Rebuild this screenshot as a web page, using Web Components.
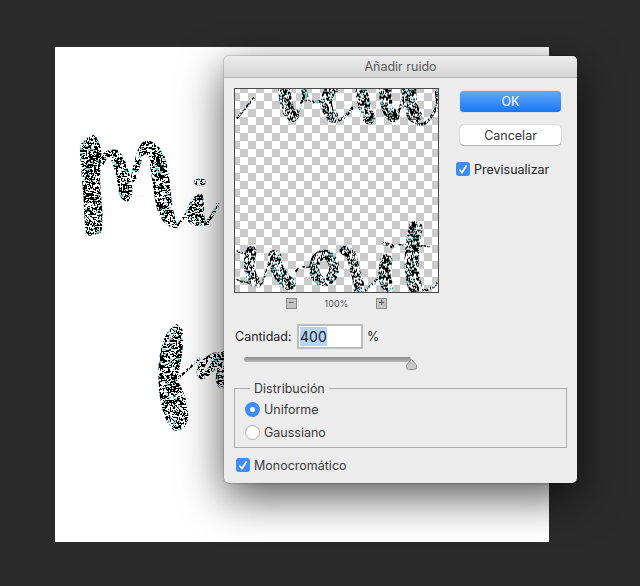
<!DOCTYPE html>
<html lang="es">
<head>
<meta charset="utf-8">
<title>Añadir ruido</title>
<style>
  html, body { margin: 0; height: 100%; background: #2b2b2b; }
  body { font: 12.5px Inter, "Liberation Sans", Arial, sans-serif; color: #222; }
</style>
</head>
<body>
<ps-desktop>
  <noise-page slot="page"></noise-page>
  <ps-dialog slot="dialog" heading="Añadir ruido">
    <ps-noise-dialog></ps-noise-dialog>
  </ps-dialog>
</ps-desktop>

<script>
// small seeded random so the speckle is the same on every run
function makeNoise(seed, cell, size) {
  let s = seed;
  let rnd = () => {
    s = (s * 1664525 + 1013904223) % 4294967296;
    return s / 4294967296;
  };
  let paths = { b: '', w: '', t: '' };
  let prev = [];
  for (let y = 0; y < size; y++) {
    for (let x = 0; x < size; x++) {
      let r = rnd();
      let kind = r < 0.48 ? 'b' : r < 0.9 ? 'w' : 't';
      // copy a neighbour now and then, the real speckle clumps together
      let c = rnd();
      if (c < 0.2 && x > 0) kind = prev[x - 1];
      else if (c < 0.35 && y > 0) kind = prev[x];
      prev[x] = kind;
      paths[kind] += `M${x * cell} ${y * cell}h${cell}v${cell}h-${cell}z`;
    }
  }
  return `<path d="${paths.w}" fill="#fff"/><path d="${paths.b}" fill="#000"/><path d="${paths.t}" fill="#5cc9c9"/>`;
}

class PsDesktop extends HTMLElement {
  constructor() {
    super();
    this.attachShadow({ mode: 'open' });
    this.shadowRoot.innerHTML = `
      <style>
        :host { display: block; position: relative; width: 640px; height: 586px; overflow: hidden; background: #2b2b2b; }
        ::slotted([slot="page"]) { position: absolute; left: 55px; top: 47px; }
        ::slotted([slot="dialog"]) { position: absolute; left: 224px; top: 56px; }
      </style>
      <slot name="page"></slot>
      <slot name="dialog"></slot>
    `;
  }
}

class NoisePage extends HTMLElement {
  constructor() {
    super();
    this.attachShadow({ mode: 'open' });
    this.shadowRoot.innerHTML = `
      <style>
        :host { display: block; width: 494px; height: 495px; background: #fff; }
        svg { display: block; }
      </style>
      <svg width="494" height="495" viewBox="55 47 494 495">
        <defs>
          <pattern id="n" patternUnits="userSpaceOnUse" width="270" height="270">${makeNoise(11, 3, 90)}</pattern>
        </defs>
        <g transform="translate(50 120) scale(.3333)" fill="url(#n)" stroke="url(#n)" stroke-width="5">
          <path d="M92 78C100 62 120 50 132 47C145 60 150 80 152 100C150 130 145 170 150 220C155 260 158 300 152 335C140 340 120 348 110 345C105 300 105 260 102 220C98 170 92 120 92 78Z"/>
          <path d="M155 110C165 95 180 88 200 92C220 105 235 150 242 190C247 215 245 235 232 242C215 240 208 225 206 195C200 160 190 120 178 108C170 110 162 125 158 135Z"/>
          <path d="M245 170C255 130 262 85 280 68C300 58 325 75 340 105C352 135 358 190 362 240C366 285 380 305 378 322C350 320 335 300 325 270C315 240 310 180 300 120C295 100 285 95 278 105C268 130 260 170 252 190Z"/>
          <path d="M378 322C395 305 405 285 420 265" fill="none" stroke-width="7"/>
          <path d="M408 290C415 255 435 220 455 225C462 250 458 280 462 300C470 310 480 305 475 312C450 318 420 318 408 290Z"/>
          <path d="M465 310C485 300 495 270 505 250" fill="none" stroke-width="9"/>
          <ellipse cx="450" cy="186" rx="15" ry="8"/>
        </g>
        <g transform="translate(140 310) scale(.3333)" fill="url(#n)" stroke="url(#n)" stroke-width="5">
          <path d="M110 45C80 55 62 110 58 170C55 240 65 320 100 358C125 365 145 345 142 310C140 270 120 225 108 210C118 170 132 100 125 60Z"/>
          <path d="M108 208C130 195 150 170 180 145" fill="none" stroke-width="7"/>
          <path fill-rule="evenodd" d="M252 125C225 125 195 135 175 165C165 190 175 215 195 205C215 190 225 175 235 175C225 200 225 230 250 240L252 240ZM215 150C200 155 190 170 190 185C205 180 215 165 215 150Z" stroke-width="2"/>
        </g>
      </svg>
    `;
  }
}

class PsDialog extends HTMLElement {
  constructor() {
    super();
    this.attachShadow({ mode: 'open' });
    this.shadowRoot.innerHTML = `
      <style>
        :host {
          display: block; width: 353px; height: 427px;
          background: #ececec; border-radius: 5px;
          box-shadow: 0 14px 44px rgba(0,0,0,.66), 0 0 2px rgba(0,0,0,.5);
        }
        header {
          height: 21px; line-height: 21px; text-align: center; color: #5a5a5a;
          background: linear-gradient(#ececec, #d6d6d6);
          border-bottom: 1px solid #b4b4b4; border-radius: 5px 5px 0 0;
        }
      </style>
      <header></header>
      <slot></slot>
    `;
    this.shadowRoot.querySelector('header').textContent = this.getAttribute('heading');
  }
}

class PsButton extends HTMLElement {
  constructor() {
    super();
    this.attachShadow({ mode: 'open' });
    this.shadowRoot.innerHTML = `
      <style>
        :host {
          display: flex; align-items: center; justify-content: center;
          width: 101px; height: 20px; border-radius: 4px; font-size: 12.5px; color: #333;
          background: #fff; box-shadow: 0 0 1px rgba(0,0,0,.45), 0 1px 1px rgba(0,0,0,.2);
        }
        :host([primary]) {
          height: 21px; color: #fff;
          background: linear-gradient(#62a9fb, #1a76f2);
          box-shadow: 0 0 1px rgba(0,0,0,.35);
        }
      </style>
      <slot></slot>
    `;
  }
}

class PsCheck extends HTMLElement {
  constructor() {
    super();
    this.attachShadow({ mode: 'open' });
    this.shadowRoot.innerHTML = `
      <style>
        :host { display: flex; align-items: center; gap: 4px; height: 14px; font-size: 12.5px; }
        i { width: 14px; height: 14px; border-radius: 3px; background: #3d8df5; display: block; }
        svg { display: block; }
      </style>
      <i><svg width="14" height="14" viewBox="0 0 14 14"><path d="M3.5 7.5l2.5 3 4.5-7" fill="none" stroke="#fff" stroke-width="1.7"/></svg></i>
      <slot></slot>
    `;
  }
}

class PsRadio extends HTMLElement {
  constructor() {
    super();
    this.attachShadow({ mode: 'open' });
    this.shadowRoot.innerHTML = `
      <style>
        :host { display: flex; align-items: center; gap: 4px; height: 16px; font-size: 12.5px; color: #3a3a3a; }
        i { box-sizing: border-box; width: 15px; height: 15px; border-radius: 50%; background: #fff; border: 1px solid #b0b0b0; display: block; }
        :host([checked]) i { border: 5px solid #3d8df5; }
      </style>
      <i></i>
      <slot></slot>
    `;
  }
}

class PsPreview extends HTMLElement {
  constructor() {
    super();
    this.attachShadow({ mode: 'open' });
    this.shadowRoot.innerHTML = `
      <style>
        :host {
          display: block; box-sizing: border-box; width: 205px; height: 205px;
          border: 1px solid #4a4a4a; overflow: hidden;
          background: repeating-conic-gradient(#cbcbcb 0 25%, #fff 0 50%) 5px 4px / 16px 16px;
        }
        svg { display: block; }
      </style>
      <svg width="203" height="203" viewBox="33 118 609 609">
        <defs>
          <pattern id="n" patternUnits="userSpaceOnUse" width="270" height="270">${makeNoise(29, 3, 90)}</pattern>
        </defs>
        <g fill="none" stroke="url(#n)" stroke-linecap="round">
          <path d="M40 205L90 145" stroke-width="6"/>
          <path d="M180 108C182 150 190 185 205 198" stroke-width="38"/>
          <path d="M215 205C225 185 235 150 245 130M245 150C265 160 285 160 300 150" stroke-width="8"/>
          <path d="M240 125L248 150" stroke-width="16"/>
          <path d="M335 108C305 130 295 170 325 198" stroke-width="34"/>
          <path d="M315 210C335 222 360 210 385 175" stroke-width="9"/>
          <path d="M412 108C415 150 425 185 435 205" stroke-width="38"/>
          <path d="M485 108C480 150 490 185 508 200" stroke-width="36"/>
          <path d="M515 205C525 190 530 170 535 150" stroke-width="7"/>
          <path d="M555 108C553 150 560 180 572 198" stroke-width="44"/>
          <path d="M578 222C600 235 625 205 640 165" stroke-width="8"/>
          <path d="M642 130L646 180" stroke-width="18"/>
          <path d="M40 605L62 612" stroke-width="6"/>
          <path d="M82 605C70 640 75 670 92 695" stroke-width="32"/>
          <path d="M35 690C50 700 70 690 80 705M100 712C115 715 130 660 140 620" stroke-width="6"/>
          <path d="M152 620C150 650 175 690 195 702" stroke-width="40"/>
          <path d="M215 665C225 650 245 650 260 655" stroke-width="6"/>
          <ellipse cx="300" cy="655" rx="30" ry="40" stroke-width="30"/>
          <path d="M362 602C390 610 385 640 395 670C405 700 408 712 404 720" stroke-width="30"/>
          <path d="M420 725C445 705 460 690 472 672" stroke-width="6"/>
          <path d="M487 632C478 660 480 690 490 708" stroke-width="36"/>
          <path d="M482 582L505 590" stroke-width="12"/>
          <path d="M575 535C565 580 555 650 572 708" stroke-width="42"/>
          <path d="M525 585L615 590" stroke-width="5"/>
          <path d="M585 722C610 725 630 715 645 695" stroke-width="8"/>
        </g>
      </svg>
    `;
  }
}

class PsNoiseDialog extends HTMLElement {
  constructor() {
    super();
    this.attachShadow({ mode: 'open' });
    this.shadowRoot.innerHTML = `
      <style>
        :host { display: block; padding: 10px; font-size: 12.5px; color: #222; }
        .top { display: flex; gap: 17px; }
        .side { display: flex; flex-direction: column; padding-top: 3px; }
        .side ps-button { margin-left: 4px; }
        .side ps-button + ps-button { margin-top: 13px; }
        .side ps-check { margin-top: 17px; }
        .zoom { width: 205px; height: 11px; margin-top: 5px; display: flex; justify-content: center; align-items: center; }
        .zoom b {
          box-sizing: border-box; width: 11px; height: 11px; background: #c4c4c4; border: 1px solid #8a8a8a;
          font: 10px/8px "Liberation Sans", sans-serif; text-align: center; color: #444;
        }
        .zoom span { width: 79px; text-align: center; font-size: 9px; color: #555; }
        .amount { display: flex; align-items: center; margin: 15px 0 0 1px; }
        .amount label { width: 62px; }
        .field {
          box-sizing: border-box; width: 66px; height: 25px; background: #fff; border: 2px solid #bcbcbc;
          display: flex; align-items: center; padding-left: 1px; font-size: 14px;
        }
        .field span { background: #b5d5fb; padding: 1px 0; }
        .amount em { font-style: normal; margin-left: 4px; }
        .slider { position: relative; width: 167px; height: 13px; margin: 8px 0 0 10px; }
        .slider i { display: block; height: 5px; border-radius: 3px; background: linear-gradient(#8c8c8c, #b8b8b8); }
        .slider svg { position: absolute; left: 162px; top: 2px; }
        fieldset { margin: 11px 0 0; padding: 5px 0 7px 10px; width: 333px; height: 67px; box-sizing: border-box; border: 1px solid #adadad; border-radius: 0; }
        legend { margin-left: 5px; padding: 0 4px; height: 15px; line-height: 15px; color: #3a3a3a; }
        ps-radio + ps-radio { margin-top: 7px; }
        .mono { margin: 10px 0 0 2px; color: #3a3a3a; }
      </style>
      <div class="top">
        <div>
          <ps-preview></ps-preview>
          <div class="zoom"><b>&minus;</b><span>100%</span><b>+</b></div>
        </div>
        <div class="side">
          <ps-button primary>OK</ps-button>
          <ps-button>Cancelar</ps-button>
          <ps-check>Previsualizar</ps-check>
        </div>
      </div>
      <div class="amount">
        <label>Cantidad:</label>
        <div class="field"><span>400</span></div>
        <em>%</em>
      </div>
      <div class="slider">
        <i></i>
        <svg width="11" height="11" viewBox="0 0 11 11"><path d="M5.5 .5L10.5 6V8.5a2 2 0 0 1-2 2H2.5a2 2 0 0 1-2-2V6Z" fill="#c9c9c9" stroke="#8f8f8f"/></svg>
      </div>
      <fieldset>
        <legend>Distribución</legend>
        <ps-radio checked>Uniforme</ps-radio>
        <ps-radio>Gaussiano</ps-radio>
      </fieldset>
      <ps-check class="mono">Monocromático</ps-check>
    `;
  }
}

customElements.define('ps-desktop', PsDesktop);
customElements.define('noise-page', NoisePage);
customElements.define('ps-dialog', PsDialog);
customElements.define('ps-button', PsButton);
customElements.define('ps-check', PsCheck);
customElements.define('ps-radio', PsRadio);
customElements.define('ps-preview', PsPreview);
customElements.define('ps-noise-dialog', PsNoiseDialog);
</script>
</body>
</html>
